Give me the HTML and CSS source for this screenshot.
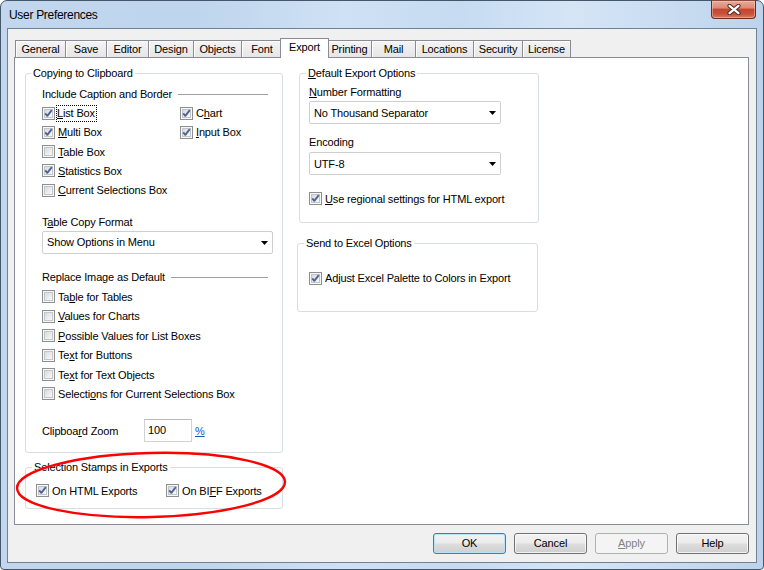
FILE: index.html
```html
<!DOCTYPE html>
<html>
<head>
<meta charset="utf-8">
<title>User Preferences</title>
<link rel="stylesheet" href="styles.css">
</head>
<body>
<svg class="defs" width="0" height="0" aria-hidden="true">
  <defs>
    <linearGradient id="cbg" x1="0" y1="0" x2="1" y2="1">
      <stop offset="0" stop-color="#d6d8dc"/>
      <stop offset="1" stop-color="#fbfbfb"/>
    </linearGradient>
    <symbol id="cb-off" viewBox="0 0 13 13">
      <rect x="0.5" y="0.5" width="12" height="12" fill="#f7f7f7" stroke="#8e8f8f"/>
      <rect x="2.5" y="2.5" width="8" height="8" fill="url(#cbg)" stroke="#c2c5ca"/>
    </symbol>
    <symbol id="cb-on" viewBox="0 0 13 13">
      <rect x="0.5" y="0.5" width="12" height="12" fill="#f7f7f7" stroke="#8e8f8f"/>
      <rect x="2.5" y="2.5" width="8" height="8" fill="url(#cbg)" stroke="#c2c5ca"/>
      <path d="M3.2 6.4 L5.3 8.8 L9.8 3.2" fill="none" stroke="#4e6296" stroke-width="1.9" stroke-linejoin="round"/>
    </symbol>
    <symbol id="arrow" viewBox="0 0 7 4">
      <polygon points="0,0 7,0 3.5,4" fill="#000"/>
    </symbol>
  </defs>
</svg>

<div class="window">
  <div class="titlebar">
    <span class="title">User Preferences</span>
    <div class="close">
      <svg width="14" height="11" viewBox="0 0 14 11">
        <path d="M2.5 1.8 L11.5 9.2 M11.5 1.8 L2.5 9.2" stroke="#4a2a24" stroke-width="4.2" stroke-linecap="round"/>
        <path d="M2.5 1.8 L11.5 9.2 M11.5 1.8 L2.5 9.2" stroke="#ffffff" stroke-width="2.2" stroke-linecap="round"/>
      </svg>
    </div>
  </div>

  <div class="client">
    <div class="tabs">
      <div class="tab">General</div>
      <div class="tab">Save</div>
      <div class="tab">Editor</div>
      <div class="tab">Design</div>
      <div class="tab">Objects</div>
      <div class="tab">Font</div>
      <div class="tab active">Export</div>
      <div class="tab">Printing</div>
      <div class="tab">Mail</div>
      <div class="tab">Locations</div>
      <div class="tab">Security</div>
      <div class="tab">License</div>
    </div>

    <div class="panel">
      <div class="col-left">
        <div class="group g-clip">
          <div class="legend">Copying to Clipboard</div>
          <div class="hdr hdr-first"><span>Include Caption and Border</span><i class="rule"></i></div>
          <div class="cbgrid">
            <div class="cb"><svg class="box"><use href="#cb-on"/></svg><span class="focus"><u>L</u>ist Box</span></div>
            <div class="cb"><svg class="box"><use href="#cb-on"/></svg><span>C<u>h</u>art</span></div>
            <div class="cb"><svg class="box"><use href="#cb-on"/></svg><span><u>M</u>ulti Box</span></div>
            <div class="cb"><svg class="box"><use href="#cb-on"/></svg><span><u>I</u>nput Box</span></div>
            <div class="cb"><svg class="box"><use href="#cb-off"/></svg><span><u>T</u>able Box</span></div>
            <div></div>
            <div class="cb"><svg class="box"><use href="#cb-on"/></svg><span><u>S</u>tatistics Box</span></div>
            <div></div>
            <div class="cb"><svg class="box"><use href="#cb-off"/></svg><span><u>C</u>urrent Selections Box</span></div>
          </div>

          <div class="field-label tcf">T<u>a</u>ble Copy Format</div>
          <div class="select"><span>Show Options in Menu</span><svg class="arr"><use href="#arrow"/></svg></div>

          <div class="hdr hdr-second"><span>Replace Image as Default</span><i class="rule"></i></div>
          <div class="cblist">
            <div class="cb"><svg class="box"><use href="#cb-off"/></svg><span>Ta<u>b</u>le for Tables</span></div>
            <div class="cb"><svg class="box"><use href="#cb-off"/></svg><span><u>V</u>alues for Charts</span></div>
            <div class="cb"><svg class="box"><use href="#cb-off"/></svg><span><u>P</u>ossible Values for List Boxes</span></div>
            <div class="cb"><svg class="box"><use href="#cb-off"/></svg><span>Te<u>x</u>t for Buttons</span></div>
            <div class="cb"><svg class="box"><use href="#cb-off"/></svg><span>Te<u>x</u>t for Text Objects</span></div>
            <div class="cb"><svg class="box"><use href="#cb-off"/></svg><span>Selecti<u>o</u>ns for Current Selections Box</span></div>
          </div>

          <div class="zoomrow">
            <span class="zoomlabel">Clipboa<u>r</u>d Zoom</span>
            <div class="input">100</div>
            <span class="pct">%</span>
          </div>
        </div>

        <div class="group g-stamps">
          <div class="legend">Selection Stamps in Exports</div>
          <div class="stamps">
            <div class="cb"><svg class="box"><use href="#cb-on"/></svg><span>On HTML Exports</span></div>
            <div class="cb"><svg class="box"><use href="#cb-on"/></svg><span>On BI<u>F</u>F Exports</span></div>
          </div>
          <svg class="annot" viewBox="0 0 272 68">
            <ellipse cx="135" cy="33" rx="134" ry="32" fill="none" stroke="#ff0000" stroke-width="2.4" transform="rotate(-1.4 135 33)"/>
          </svg>
        </div>
      </div>

      <div class="col-right">
        <div class="group g-export">
          <div class="legend"><u>D</u>efault Export Options</div>
          <div class="field-label nf"><u>N</u>umber Formatting</div>
          <div class="select"><span>No Thousand Separator</span><svg class="arr"><use href="#arrow"/></svg></div>
          <div class="field-label enc">Encodin<u>g</u></div>
          <div class="select"><span>UTF-8</span><svg class="arr"><use href="#arrow"/></svg></div>
          <div class="cb regional"><svg class="box"><use href="#cb-on"/></svg><span><u>U</u>se regional settings for HTML export</span></div>
        </div>

        <div class="group g-excel">
          <div class="legend">Send to Excel Options</div>
          <div class="cb palette"><svg class="box"><use href="#cb-on"/></svg><span>Ad<u>j</u>ust Excel Palette to Colors in Export</span></div>
        </div>
      </div>
    </div>

    <div class="buttons">
      <div class="btn default">OK</div>
      <div class="btn">Cancel</div>
      <div class="btn disabled"><u>A</u>pply</div>
      <div class="btn">Help</div>
    </div>
  </div>
</div>
</body>
</html>
```

FILE: styles.css
```css
* { box-sizing: border-box; }

html, body {
  margin: 0;
  padding: 0;
}

body {
  width: 764px;
  height: 570px;
  overflow: hidden;
  font-family: "Liberation Sans", Arial, sans-serif;
  font-size: 11px;
  letter-spacing: -0.15px;
  color: #000;
  background: #fff;
}

.defs {
  display: block;
  width: 0;
  height: 0;
  overflow: hidden;
}

u { text-decoration: underline; text-underline-offset: 1px; }

/* ---------- window frame ---------- */
.window {
  width: 764px;
  height: 570px;
  border: 1px solid #44576b;
  border-radius: 7px 7px 4px 4px;
  padding: 0 6px 6px;
  display: flex;
  flex-direction: column;
  background:
    linear-gradient(90deg, #c2d7ee 0%, #bed5ed 25%, #cfe1f4 45%, #c6dbf1 60%, #d5e5f6 75%, #bdd3ec 100%);
}

.titlebar {
  height: 27px;
  display: flex;
  align-items: center;
  justify-content: space-between;
  padding-left: 2px;
}

.title {
  font-size: 12px;
  letter-spacing: -0.3px;
  color: #000;
  padding-top: 1px;
}

.close {
  align-self: flex-start;
  margin-top: -1px;
  margin-right: 1px;
  width: 45px;
  height: 19px;
  border: 1px solid #6a2b20;
  border-top-color: #8a4a3e;
  border-radius: 0 0 4px 4px;
  background: linear-gradient(#eaa999 0%, #dd8a76 40%, #c5462f 50%, #c8503a 75%, #d67a63 100%);
  box-shadow: inset 0 0 0 1px rgba(255, 210, 195, 0.45);
  display: flex;
  align-items: center;
  justify-content: center;
}

/* ---------- client area ---------- */
.client {
  flex: 1;
  background: #f0f0f0;
  border: 1px solid #6f8296;
  padding: 9px 7px 8px 6px;
  display: flex;
  flex-direction: column;
}

.tabs {
  display: grid;
  grid-template-columns: 50px 41px 42px 45px 48px 41px 45px 44px 44px 58px 49px 48px;
  height: 20px;
  margin-left: 1px;
  margin-bottom: -1px;
  align-items: start;
  position: relative;
  z-index: 1;
}

.tab {
  width: calc(100% + 1px);
  height: 17px;
  margin-top: 2px;
  border: 1px solid #898c95;
  border-bottom: none;
  background: linear-gradient(#f4f4f4, #e6e6e6);
  box-shadow: inset 1px 1px 0 #fff;
  text-align: center;
  line-height: 16px;
  white-space: nowrap;
}

.tab.active {
  width: calc(100% + 4px);
  margin: 0 0 0 -2px;
  height: 20px;
  background: #fff;
  box-shadow: none;
  line-height: 17px;
  position: relative;
  z-index: 2;
}

.panel {
  height: 468px;
  background: #fff;
  border: 1px solid #898c95;
  padding: 15px 0 0 10px;
  display: flex;
  gap: 16px;
}

.col-left { width: 258px; }
.col-right { width: 240px; }

/* ---------- group boxes ---------- */
.group {
  border: 1px solid #d5dfe5;
  border-radius: 3px;
}

.legend {
  width: fit-content;
  height: 13px;
  line-height: 13px;
  margin-top: -7px;
  padding: 0 2px;
  background: #fff;
  white-space: nowrap;
}

.g-clip { padding: 0 9px 10px 16px; }
.g-clip > .legend { margin-left: -11px; }

.hdr {
  height: 19px;
  display: flex;
  align-items: center;
  margin-right: 5px;
  white-space: nowrap;
}
.hdr-first { margin-top: 4.5px; }
.hdr-second { margin-top: 13.75px; }

.rule {
  flex: 1;
  height: 1px;
  margin-left: 6px;
  background: #a0a0a0;
}

.cb {
  display: flex;
  align-items: center;
  gap: 3px;
  height: 19px;
  white-space: nowrap;
}

.box {
  width: 13px;
  height: 13px;
  flex: none;
}

.focus {
  outline: 1px dotted #000;
  outline-offset: 0;
  padding: 0 1px 0 0;
  margin-left: -1px;
  line-height: 15px;
}

.cbgrid {
  display: grid;
  grid-template-columns: 138px auto;
  grid-auto-rows: 19.25px;
}
.cbgrid .cb { height: 19.25px; }

.field-label {
  height: 18px;
  line-height: 18px;
  white-space: nowrap;
}
.tcf { margin-top: 13px; }

.select {
  height: 23px;
  border: 1px solid #cfcfcf;
  border-radius: 2px;
  background: #fff;
  display: flex;
  align-items: center;
  justify-content: space-between;
  padding: 0 4px 0 4px;
  white-space: nowrap;
}

.arr {
  width: 7px;
  height: 4px;
  flex: none;
  margin-top: 1px;
}

.cblist {
  display: grid;
  grid-auto-rows: 19.4px;
  margin-top: 0.8px;
}
.cblist .cb { height: 19.4px; }

.zoomrow {
  display: flex;
  align-items: center;
  height: 23px;
  margin-top: 15.3px;
}

.zoomlabel { width: 102px; white-space: nowrap; padding-top: 2px; }

.input {
  width: 48px;
  height: 23px;
  border: 1px solid #d3d3d3;
  border-top-color: #b9b9b9;
  background: #fff;
  padding-left: 3px;
  line-height: 21px;
}

.pct {
  margin-left: 3px;
  padding-top: 2px;
  color: #1a56b0;
  text-decoration: underline;
}

.g-stamps {
  margin-top: 14px;
  padding: 0 0 7.5px 10px;
  position: relative;
}
.g-stamps > .legend { margin-left: -4px; }

.stamps {
  display: grid;
  grid-template-columns: 130px auto;
  margin-top: 7.5px;
}

.annot {
  position: absolute;
  left: -10px;
  top: -16px;
  width: 272px;
  height: 68px;
  overflow: visible;
  pointer-events: none;
}

/* right column */
.g-export { padding: 0 0 14px 9px; }
.g-export > .legend { margin-left: -3px; }
.g-export .select { width: 192px; }
.nf { margin-top: 3px; }
.enc { margin-top: 9px; }
.enc + .select { margin-top: 1px; }
.regional { margin-top: 14px; }

.g-excel {
  margin-top: 20px;
  margin-left: -2px;
  width: 241px;
  padding: 0 0 23px 11px;
}
.g-excel > .legend { margin-left: -5px; }
.palette { margin-top: 18.5px; }

/* ---------- buttons ---------- */
.buttons {
  margin-top: 8px;
  display: flex;
  justify-content: flex-end;
  gap: 8px;
}

.btn {
  width: 73px;
  height: 21px;
  border: 1px solid #707070;
  border-radius: 3px;
  background: linear-gradient(#f2f2f2 0%, #ebebeb 48%, #dddddd 52%, #cfcfcf 100%);
  box-shadow: inset 0 0 0 1px rgba(255, 255, 255, 0.75);
  text-align: center;
  line-height: 19px;
}

.btn.default {
  border-color: #3c7fb1;
  box-shadow: inset 0 0 0 1px #b9e3f7;
}

.btn.disabled {
  border-color: #adb2b5;
  background: #f4f4f4;
  box-shadow: none;
  color: #838383;
}
```
